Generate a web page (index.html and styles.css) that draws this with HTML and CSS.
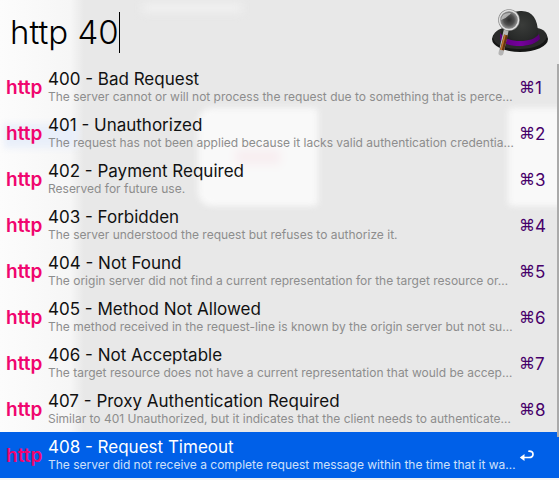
FILE: index.html
```html
<!DOCTYPE html>
<html lang="en">
<head>
<meta charset="utf-8">
<meta name="viewport" content="width=device-width, initial-scale=1">
<title>http 40</title>
<link rel="stylesheet" href="styles.css">
</head>
<body>
<div class="backdrop" aria-hidden="true">
  <div class="pane"></div>
  <div class="stripe"></div>
  <div class="card"><div class="smudge"></div></div>
  <div class="card card-edge"></div>
  <div class="banner"></div>
</div>
<main class="launcher">
  <header class="search">
    <label class="field"><input class="query" type="text" value="http 40" size="7" aria-label="Search"><span class="caret"></span></label>
    <svg class="hat" viewBox="0 0 60 48" aria-hidden="true">
      <defs>
        <radialGradient id="felt" cx=".55" cy=".4" r=".7"><stop offset="0" stop-color="#3a3c3a"/><stop offset=".6" stop-color="#292b2a"/><stop offset="1" stop-color="#161616"/></radialGradient>
        <radialGradient id="glass"><stop offset="0" stop-color="#2c2c2c"/><stop offset=".55" stop-color="#505050"/><stop offset="1" stop-color="#a0a0a0"/></radialGradient>
        <linearGradient id="band"><stop offset="0" stop-color="#5c007d"/><stop offset=".5" stop-color="#75009c"/><stop offset="1" stop-color="#540072"/></linearGradient>
      </defs>
      <ellipse cx="29" cy="31" rx="28" ry="13" fill="#151615"/>
      <path d="M2 30C2 24 9 20 14 20h32c7 1 10 5 10 9-3 8-14 12-27 12S4 38 2 30z" fill="#2a2b2a"/>
      <path d="M10 30C10 14 15 4 29 3c12-1 18 8 18 22l1 6c-5 9-32 10-38-1z" fill="url(#felt)"/>
      <path d="M9 25c6 7 13 8 20 8 9 0 15-2 19-7l1 5c-5 5-12 7-20 7-9 0-16-2-20-6z" fill="url(#band)"/>
      <path d="M15 23l-5 22" stroke="#b5b5b5" stroke-width="5" stroke-linecap="round"/>
      <path d="M15 27l-4 15" stroke="#65340e" stroke-width="4"/>
      <path d="M14 27l-4 15" stroke="#bd722c" stroke-width="1.5"/>
      <circle cx="18" cy="12" r="9.5" fill="url(#glass)" stroke="#808080" stroke-width="2.6"/>
      <circle cx="18" cy="12" r="9.5" fill="none" stroke="#e0e0e0" stroke-width="1.5"/>
      <path d="M10 12q1-8 10-7-4 5-10 7z" fill="#ddd" opacity=".65"/>
    </svg>
  </header>
  <ul class="results">
    <li><button class="row" type="button"><span class="logo">http</span><span class="copy"><span class="title">400 - Bad Request</span><span class="detail">The server cannot or will not process the request due to something that is perce…</span></span><kbd class="key"><span class="cmd">⌘</span>1</kbd></button></li>
    <li><button class="row" type="button"><span class="logo">http</span><span class="copy"><span class="title">401 - Unauthorized</span><span class="detail">The request has not been applied because it lacks valid authentication credentia…</span></span><kbd class="key"><span class="cmd">⌘</span>2</kbd></button></li>
    <li><button class="row" type="button"><span class="logo">http</span><span class="copy"><span class="title">402 - Payment Required</span><span class="detail">Reserved for future use.</span></span><kbd class="key"><span class="cmd">⌘</span>3</kbd></button></li>
    <li><button class="row" type="button"><span class="logo">http</span><span class="copy"><span class="title">403 - Forbidden</span><span class="detail">The server understood the request but refuses to authorize it.</span></span><kbd class="key"><span class="cmd">⌘</span>4</kbd></button></li>
    <li><button class="row" type="button"><span class="logo">http</span><span class="copy"><span class="title">404 - Not Found</span><span class="detail">The origin server did not find a current representation for the target resource or…</span></span><kbd class="key"><span class="cmd">⌘</span>5</kbd></button></li>
    <li><button class="row" type="button"><span class="logo">http</span><span class="copy"><span class="title">405 - Method Not Allowed</span><span class="detail">The method received in the request-line is known by the origin server but not su…</span></span><kbd class="key"><span class="cmd">⌘</span>6</kbd></button></li>
    <li><button class="row" type="button"><span class="logo">http</span><span class="copy"><span class="title">406 - Not Acceptable</span><span class="detail">The target resource does not have a current representation that would be accep…</span></span><kbd class="key"><span class="cmd">⌘</span>7</kbd></button></li>
    <li><button class="row" type="button"><span class="logo">http</span><span class="copy"><span class="title">407 - Proxy Authentication Required</span><span class="detail">Similar to 401 Unauthorized, but it indicates that the client needs to authenticate…</span></span><kbd class="key"><span class="cmd">⌘</span>8</kbd></button></li>
    <li><button class="row selected" type="button"><span class="logo">http</span><span class="copy"><span class="title">408 - Request Timeout</span><span class="detail">The server did not receive a complete request message within the time that it wa…</span></span><span class="key"><svg class="return" viewBox="0 0 16 12" aria-hidden="true"><path d="M10 1.2c3 0 4 1.3 4 3 0 2-1.5 3.3-4 3.3H3" fill="none" stroke="#fff" stroke-width="1.7" stroke-linecap="round"/><path d="M5.5 4v7L.8 7.5z" fill="#fff"/></svg></span></button></li>
  </ul>
  <div class="scrollbar"></div>
</main>
</body>
</html>
```
FILE: styles.css
```css
* { box-sizing: border-box; }
body {
  margin: 0;
  background: #e8e8e8;
  font-family: Inter, "Liberation Sans", sans-serif;
  overflow: hidden;
}
.launcher { position: relative; border-bottom: 2px solid #f4f4f4; }

/* Blurred window contents showing through the translucent panel */
.backdrop { position: absolute; inset: 0; overflow: hidden; }
.pane { position: absolute; inset: 0 auto 0 0; width: 84px; background: linear-gradient(90deg, #fcfcfc, #f6f6f6 84%, #e8e8e8); }
.stripe { position: absolute; top: 124px; left: 4px; width: 74px; height: 24px; background: #e9effa; filter: blur(3px); }
.card { position: absolute; top: 108px; left: 198px; width: 120px; height: 98px; border-radius: 14px 4px 4px 14px; background: #f9f9f9; filter: blur(3px); }
.card-edge { left: 508px; border-radius: 4px; }
.smudge { width: 44px; height: 14px; margin: 42px 38px; background: #f8edf0; filter: blur(3px); }
.banner { position: absolute; top: 3px; left: 142px; width: 100px; height: 10px; background: #f0f0f0; filter: blur(4px); }

.search { display: flex; align-items: center; justify-content: space-between; height: 64px; padding: 0 8px 0 10px; }
.field { display: flex; align-items: center; }
.query {
  field-sizing: content;
  padding: 0;
  border: 0;
  outline: 0;
  background: none;
  color: #000;
  font: 300 33px/42px Inter, "Liberation Sans", sans-serif;
}
.caret { width: 1px; height: 41px; background: #000; }
.hat { width: 60px; height: 48px; }

.results { margin: 0; padding: 0; list-style: none; }
.row {
  display: flex;
  align-items: center;
  width: 100%;
  height: 46px;
  padding: 0 0 0 6px;
  border: 0;
  background: none;
  color: #111;
  font-family: inherit;
  text-align: left;
}
.logo { flex: none; width: 42px; padding-top: 2px; color: #f0066e; font: 600 19px/24px Inter, sans-serif; }
.copy { flex: 1; min-width: 0; }
.title { display: block; font-size: 17px; line-height: 20px; }
.detail { display: block; color: #8d8d8d; font-size: 12px; line-height: 16px; white-space: nowrap; }
.key { flex: none; display: flex; align-items: center; width: 40px; padding-top: 2px; color: #47006a; font: 400 17px/20px Inter, sans-serif; }
.cmd { font: 16px/20px "DejaVu Sans", sans-serif; }
.return { width: 16px; height: 12px; }
.selected { background: #0060e8; color: #fff; }
.selected .detail { color: #cfe0fa; }
.scrollbar { position: absolute; top: 64px; right: 0; width: 2px; height: 373px; background: #aaa; }
```
